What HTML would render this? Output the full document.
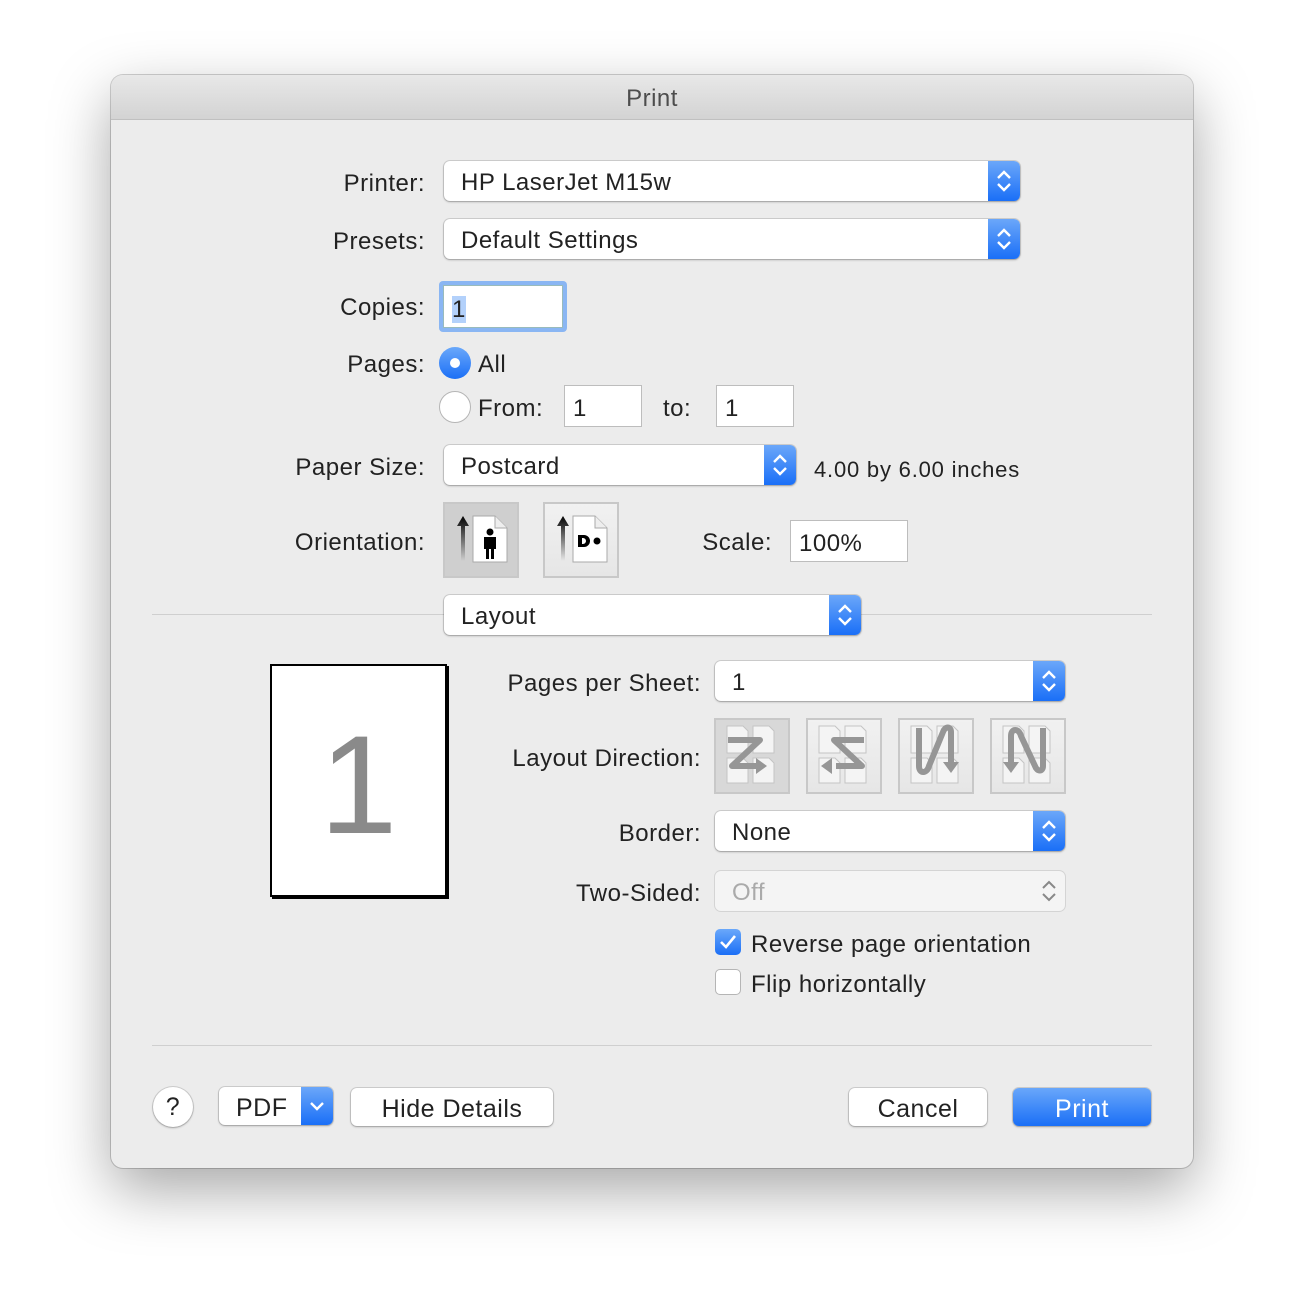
<!DOCTYPE html>
<html><head><style>
body{margin:0;width:1304px;height:1316px;background:#fff;font-family:"Liberation Sans",sans-serif;position:relative;overflow:hidden;color:#222;letter-spacing:0.5px}
.win{position:absolute;left:111px;top:75px;width:1082px;height:1093px;background:#ececec;border-radius:12px;box-shadow:0 22px 60px rgba(0,0,0,.35),0 0 0 1px rgba(0,0,0,.18);overflow:hidden}
.tb{position:absolute;left:0;top:0;width:100%;height:44px;background:linear-gradient(#e8e8e8,#d3d3d3);border-bottom:1px solid #c0c0c0;text-align:center;line-height:48px;font-size:24px;color:#4d4d4d}
.a{position:absolute}
.lbl{position:absolute;font-size:24px;text-align:right;white-space:nowrap;margin-top:2px}
.pop{position:absolute;background:#fff;border-radius:6px;box-shadow:0 0 0 1px rgba(0,0,0,.12),0 1px 2px rgba(0,0,0,.25);font-size:24px;box-sizing:border-box;padding-left:17px;white-space:nowrap}
.pop .ar{position:absolute;right:0;top:0;bottom:0;width:32px;background:linear-gradient(#6ba7f9,#1a6ff7);border-radius:0 6px 6px 0}
.fld{position:absolute;background:#fff;border:1px solid #bdbdbd;box-sizing:border-box;font-size:24px;padding-left:8px}
.btn{position:absolute;background:#fff;border-radius:6px;box-shadow:0 0 0 1px rgba(0,0,0,.12),0 1px 2px rgba(0,0,0,.25);font-size:25px;text-align:center;box-sizing:border-box}
.ib{position:absolute;width:76px;height:76px;box-sizing:border-box;border:2px solid #c8c8c8;background:linear-gradient(#f1f1f1,#e6e6e6)}
.line{position:absolute;height:1px;background:#cfcfcf}
</style></head><body>
<div class="win">
<div class="tb">Print</div>
</div>
<svg width="0" height="0" style="position:absolute"><defs>
<symbol id="ud" viewBox="0 0 32 40"><path d="M10 17l6-6 6 6M10 23l6 6 6-6" fill="none" stroke="#fff" stroke-width="2.4"/></symbol>
</defs></svg>

<div class="lbl" style="right:879px;top:168px">Printer:</div>
<div class="pop" style="left:444px;top:161px;width:576px;height:40px;line-height:44px">HP LaserJet M15w<div class="ar"><svg width="32" height="40"><use href="#ud"/></svg></div></div>
<div class="lbl" style="right:879px;top:226px">Presets:</div>
<div class="pop" style="left:444px;top:219px;width:576px;height:40px;line-height:44px">Default Settings<div class="ar"><svg width="32" height="40"><use href="#ud"/></svg></div></div>

<div class="lbl" style="right:879px;top:292px">Copies:</div>
<div class="a" style="left:439px;top:281px;width:128px;height:51px;border-radius:4px;background:#8ab6f3"></div>
<div class="fld" style="left:443px;top:285px;width:120px;height:43px;line-height:47px;border-color:#9bb"><span style="background:#b3d1fb">1</span></div>

<div class="lbl" style="right:879px;top:349px">Pages:</div>
<div class="a" style="left:439px;top:347px;width:32px;height:32px;border-radius:50%;background:linear-gradient(#6aa8fa,#1b6ff6)"><div class="a" style="left:11px;top:11px;width:10px;height:10px;border-radius:50%;background:#fff"></div></div>
<div class="lbl" style="left:478px;top:349px">All</div>
<div class="a" style="left:439px;top:391px;width:30px;height:30px;border-radius:50%;background:#fff;border:1px solid #b5b5b5"></div>
<div class="lbl" style="left:478px;top:393px">From:</div>
<div class="fld" style="left:564px;top:385px;width:78px;height:42px;line-height:46px">1</div>
<div class="lbl" style="left:663px;top:393px">to:</div>
<div class="fld" style="left:716px;top:385px;width:78px;height:42px;line-height:46px">1</div>

<div class="lbl" style="right:879px;top:452px">Paper Size:</div>
<div class="pop" style="left:444px;top:445px;width:352px;height:40px;line-height:44px">Postcard<div class="ar"><svg width="32" height="40"><use href="#ud"/></svg></div></div>
<div class="lbl" style="left:814px;top:455px;font-size:22px;letter-spacing:0.8px">4.00 by 6.00 inches</div>

<div class="lbl" style="right:879px;top:527px">Orientation:</div>
<div class="ib" style="left:443px;top:502px;background:#cfcfcf"></div>
<div class="ib" style="left:543px;top:502px"></div>
<svg class="a" style="left:443px;top:502px" width="176" height="76">
<defs><linearGradient id="g" x1="0" y1="0" x2="0" y2="1"><stop offset="0" stop-color="#000"/><stop offset="1" stop-color="#000" stop-opacity="0"/></linearGradient></defs>
<g id="o"><path d="M20 14l-6 10h4v35h4V24h4z" fill="url(#g)"/><path d="M30 14h22l12 12v34H30z" fill="#fff" stroke="#aaa"/><path d="M52 14v12h12" fill="#eee" stroke="#aaa"/></g>
<circle cx="47" cy="30" r="3.5"/><path d="M41 35h12v12h-2v10h-3v-10h-2v10h-3v-10h-2z"/>
<use href="#o" x="100"/>
<path d="M135 33h6a6 6 0 0 1 0 12h-6v-3h5a3 3 0 0 0 0-6h-5z"/><path d="M135 36h4v6h-4z"/><circle cx="154" cy="39" r="3.5"/>
</svg>
<div class="lbl" style="right:532px;top:527px">Scale:</div>
<div class="fld" style="left:790px;top:520px;width:118px;height:42px;line-height:46px">100%</div>

<div class="line" style="left:152px;top:614px;width:1000px"></div>
<div class="pop" style="left:444px;top:595px;width:417px;height:40px;line-height:44px">Layout<div class="ar"><svg width="32" height="40"><use href="#ud"/></svg></div></div>

<div class="a" style="left:270px;top:664px;width:173px;height:229px;background:#fff;border:2px solid #000;box-shadow:2px 2px 0 #000;font-size:140px;color:#8a8a8a;text-align:center;line-height:238px;letter-spacing:0">1</div>

<div class="lbl" style="right:603px;top:668px">Pages per Sheet:</div>
<div class="pop" style="left:715px;top:661px;width:350px;height:40px;line-height:44px">1<div class="ar"><svg width="32" height="40"><use href="#ud"/></svg></div></div>
<div class="lbl" style="right:603px;top:743px">Layout Direction:</div>
<div class="ib" style="left:714px;top:718px;background:#d8d8d8"></div>
<div class="ib" style="left:806px;top:718px"></div>
<div class="ib" style="left:898px;top:718px"></div>
<div class="ib" style="left:990px;top:718px"></div>
<svg class="a" style="left:714px;top:718px" width="352" height="76">
<g id="pg" fill="#f4f4f4" stroke="#c4c4c4"><path d="M13 8h16l5 5v22H13z"/><path d="M39 8h16l5 5v22H39z"/><path d="M13 40h16l5 5v20H13z"/><path d="M39 40h16l5 5v20H39z"/></g>
<g fill="none" stroke="#969696" stroke-width="6" stroke-linejoin="round"><path d="M14 22h32L18 48h26"/></g><path d="M42 40l11 8-11 8z" fill="#969696"/>
<use href="#pg" x="92"/><g fill="none" stroke="#969696" stroke-width="6" stroke-linejoin="round"><path d="M150 22h-30l28 26h-26"/></g><path d="M118 40l-11 8 11 8z" fill="#969696"/>
<use href="#pg" x="184"/><g fill="none" stroke="#969696" stroke-width="6"><path d="M205 10v38c0 8 8 8 10 0l14-34c2-6 8-6 8 0v30"/></g><path d="M229 44l8 11 8-11z" fill="#969696"/>
<use href="#pg" x="276"/><g fill="none" stroke="#969696" stroke-width="6"><path d="M297 48V18c0-8 8-8 10 0l14 30c2 6 8 6 8 0V10"/></g><path d="M289 44l8 11 8-11z" fill="#969696"/>
</svg>

<div class="lbl" style="right:603px;top:818px">Border:</div>
<div class="pop" style="left:715px;top:811px;width:350px;height:40px;line-height:44px">None<div class="ar"><svg width="32" height="40"><use href="#ud"/></svg></div></div>
<div class="lbl" style="right:603px;top:878px">Two-Sided:</div>
<div class="pop" style="left:715px;top:871px;width:350px;height:40px;line-height:44px;background:#f4f4f4;color:#aaa;box-shadow:0 0 0 1px rgba(0,0,0,.1)">Off<svg class="a" style="right:0;top:0" width="32" height="40"><path d="M10 17l6-6 6 6M10 23l6 6 6-6" fill="none" stroke="#888" stroke-width="2"/></svg></div>

<div class="a" style="left:715px;top:929px;width:26px;height:26px;border-radius:5px;background:linear-gradient(#6aa8fa,#1b6ff6)"><svg width="26" height="26"><path d="M6 13l5 5 9-11" fill="none" stroke="#fff" stroke-width="2.6"/></svg></div>
<div class="lbl" style="left:751px;top:929px">Reverse page orientation</div>
<div class="a" style="left:715px;top:969px;width:24px;height:24px;border-radius:5px;background:#fff;border:1px solid #b5b5b5"></div>
<div class="lbl" style="left:751px;top:969px">Flip horizontally</div>

<div class="line" style="left:152px;top:1045px;width:1000px"></div>
<div class="btn" style="left:153px;top:1087px;width:40px;height:40px;border-radius:50%;line-height:40px">?</div>
<div class="btn" style="left:219px;top:1087px;width:114px;height:38px;line-height:42px;text-align:left;padding-left:17px">PDF<div class="a" style="right:0;top:0;bottom:0;width:32px;background:linear-gradient(#6ba7f9,#1a6ff7);border-radius:0 6px 6px 0"><svg width="32" height="38"><path d="M10 16l6 6 6-6" fill="none" stroke="#fff" stroke-width="2.4"/></svg></div></div>
<div class="btn" style="left:351px;top:1088px;width:202px;height:38px;line-height:42px">Hide Details</div>
<div class="btn" style="left:849px;top:1088px;width:138px;height:38px;line-height:42px">Cancel</div>
<div class="btn" style="left:1013px;top:1088px;width:138px;height:38px;line-height:42px;background:linear-gradient(#69a7fa,#1a6ff6);color:#fff">Print</div>
</body></html>
